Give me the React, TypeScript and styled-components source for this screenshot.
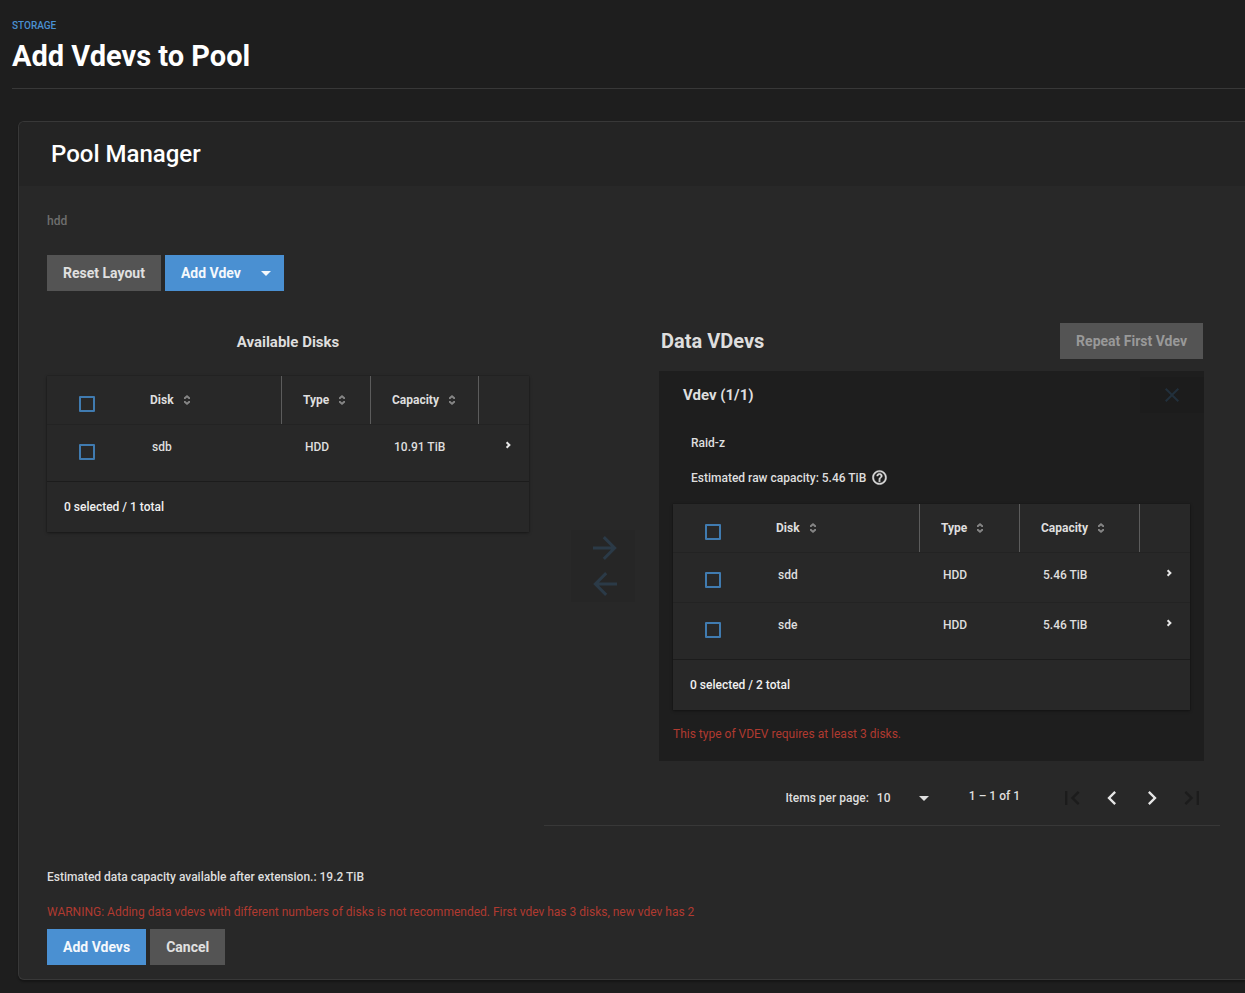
import React from "react";
import styled, { createGlobalStyle } from "styled-components";

const GlobalStyle = createGlobalStyle`
  *, *::before, *::after { box-sizing: border-box; }
  body {
    margin: 0;
    background: #1e1e1e;
    color: #dedede;
    font-family: Roboto, "Liberation Sans", sans-serif;
    font-size: 12px;
    line-height: 16px;
    font-weight: 500;
  }
  button, select, input { font: inherit; }
  h1, h2, h3, p { margin: 0; }
`;

const Page = styled.div`
  padding: 20px 0 13px;
  overflow-x: hidden;
`;

const PageHeader = styled.header`
  margin-left: 12px;
  padding-bottom: 12px;
  border-bottom: 1px solid #383838;
`;

const Crumb = styled.a`
  display: block;
  width: max-content;
  color: #4a90d2;
  font-size: 10px;
  line-height: 12px;
  text-decoration: none;
`;

const PageTitle = styled.h1`
  margin-top: 4px;
  color: #fff;
  font-size: 29px;
  line-height: 40px;
  font-weight: 700;
`;

const Card = styled.section`
  margin: 32px 0 0 18px;
  border: 1px solid #383838;
  border-right: 0;
  border-radius: 6px 0 0 6px;
  background: #282828;
  box-shadow: 0 2px 2px rgba(0, 0, 0, 0.3);
  overflow: hidden;
`;

const CardHeader = styled.div`
  padding: 16px 32px;
  background: #242424;
`;

const CardTitle = styled.h2`
  color: #fff;
  font-size: 24px;
  line-height: 32px;
  font-weight: 500;
`;

const CardBody = styled.div`
  padding: 27px 25px 14px 28px;
`;

const PoolName = styled.p`
  color: #6e6e6e;
`;

const ButtonRow = styled.div<{ $top: number }>`
  display: flex;
  gap: 4px;
  margin-top: ${(p) => p.$top}px;
`;

const Button = styled.button<{ $primary?: boolean; $menu?: boolean }>`
  display: inline-flex;
  align-items: center;
  gap: 20px;
  height: 36px;
  padding: 0 ${(p) => (p.$menu ? 13 : 16)}px 0 16px;
  border: 0;
  background: ${(p) => (p.$primary ? "#4a90d2" : "#545454")};
  color: ${(p) => (p.$primary ? "#f4f8fc" : "#e0e0e0")};
  font-size: 14px;
  font-weight: 700;
  white-space: nowrap;
  &:disabled { color: #999; }
`;

const Columns = styled.div`
  display: grid;
  grid-template-columns: minmax(0, 482fr) minmax(0, 676fr);
  column-gap: 15px;
  margin-top: 32px;
`;

const Available = styled.section`
  display: flex;
  flex-direction: column;
  gap: 14px;
`;

const SmallHeading = styled.h3`
  font-size: 15px;
  line-height: 39px;
  font-weight: 700;
  text-align: center;
`;

const Layout = styled.section`
  border-bottom: 1px solid #383838;
`;

const LayoutGrid = styled.div`
  display: grid;
  grid-template-columns: 64px minmax(0, 1fr);
  column-gap: 24px;
  row-gap: 12px;
  padding: 0 16px 0 27px;
`;

const GroupHeader = styled.div`
  grid-column: 2;
  display: flex;
  align-items: center;
  justify-content: space-between;
  padding: 0 1px 0 2px;
`;

const GroupTitle = styled.h3`
  font-size: 20px;
  line-height: 24px;
  font-weight: 700;
`;

const Arrows = styled.div`
  align-self: center;
  display: flex;
  flex-direction: column;
`;

const GhostButton = styled.button<{ $move?: boolean }>`
  display: flex;
  align-items: center;
  justify-content: center;
  width: 64px;
  height: 36px;
  padding: 0 0 0 ${(p) => (p.$move ? 4 : 0)}px;
  border: 0;
  background: rgba(0, 0, 0, 0.04);
  color: ${(p) => (p.$move ? "#2b3a47" : "#22303c")};
`;

const Vdev = styled.section`
  padding-bottom: 19px;
  background: #1e1e1e;
`;

const VdevHeader = styled.div`
  display: flex;
  align-items: center;
  justify-content: space-between;
  padding: 6px 0 6px 24px;
`;

const VdevTitle = styled.h3`
  font-size: 15px;
  line-height: 20px;
  font-weight: 700;
`;

const VdevInfo = styled.div`
  display: flex;
  flex-direction: column;
  gap: 18px;
  padding: 15px 32px 18px;
`;

const InfoLine = styled.p`
  display: flex;
  align-items: center;
  gap: 5px;
  height: 17px;
`;

const TableBox = styled.div`
  box-shadow: 0 1px 3px rgba(0, 0, 0, 0.4), 0 0 1px rgba(0, 0, 0, 0.4);
  background: #282828;
`;

const VdevTable = styled.div`
  margin: 0 14px;
`;

const Table = styled.table`
  width: 100%;
  table-layout: fixed;
  border-collapse: separate;
  border-spacing: 0;
`;

const HeadCell = styled.th<{ $divided?: boolean }>`
  height: 48px;
  padding: 0 0 0 21px;
  border-right: ${(p) => (p.$divided ? "1px solid #5c5c5c" : "0")};
  text-align: left;
  font-weight: 700;
`;

const HeadLabel = styled.span`
  display: flex;
  align-items: center;
  gap: 10px;
`;

const Cell = styled.td`
  height: 50px;
  padding: 14px 0 0 23px;
  border-top: 1px solid #232323;
  vertical-align: top;
`;

const CheckHead = styled.th`
  height: 48px;
  padding: 20px 0 0 32px;
  vertical-align: top;
  text-align: left;
`;

const CheckCell = styled(Cell)`
  padding: 19px 0 0 32px;
`;

const Check = styled.input`
  appearance: none;
  display: block;
  width: 16px;
  height: 16px;
  margin: 0;
  border: 2px solid #407bb0;
  border-radius: 1px;
`;

const Expand = styled.button`
  display: block;
  margin: 0;
  padding: 0;
  border: 0;
  background: none;
  color: #e8e8e8;
`;

const ExpandCell = styled(Cell)`
  padding: 12px 0 0 21px;
`;

const TableFooter = styled.div`
  margin-top: 7px;
  padding: 17px;
  border-top: 1px solid #1c1c1c;
  color: #f0f0f0;
`;

const ErrorText = styled.p<{ $inset?: boolean }>`
  margin-top: ${(p) => (p.$inset ? 16 : 19)}px;
  padding: 0 ${(p) => (p.$inset ? 14 : 0)}px;
  color: #b03a30;
  font-weight: 400;
`;

const Paginator = styled.div`
  display: flex;
  align-items: center;
  justify-content: flex-end;
  padding: 17px 8px 7px 0;
`;

const PageSize = styled.label`
  display: flex;
  align-items: center;
  gap: 8px;
`;

const SelectWrap = styled.span`
  display: grid;
  grid-template-columns: 52px;
  align-items: center;
  & > * { grid-area: 1 / 1; }
  & > svg { justify-self: end; pointer-events: none; }
`;

const Select = styled.select`
  appearance: none;
  width: 100%;
  padding: 0;
  border: 0;
  background: transparent;
  color: inherit;
`;

const Range = styled.span`
  margin: 0 32px 4px 40px;
`;

const PageButton = styled.button`
  display: flex;
  align-items: center;
  justify-content: center;
  width: 40px;
  height: 40px;
  padding: 0;
  border: 0;
  background: none;
  color: #e6e6e6;
  &:disabled { color: #1c1c1c; }
`;

const Estimate = styled.p`
  margin-top: 43px;
`;

const Icon = ({ d, size, bold }: { d: string; size: number; bold?: boolean }) => (
  <svg
    width={size}
    height={size}
    viewBox="0 0 24 24"
    fill="currentColor"
    stroke={bold ? "currentColor" : "none"}
    strokeWidth="0.6"
    aria-hidden="true"
  >
    <path d={d} />
  </svg>
);

const ICONS = {
  right: "M4,11V13H16L10.5,18.5L11.92,19.92L19.84,12L11.92,4.08L10.5,5.5L16,11H4Z",
  left: "M20,11V13H8L13.5,18.5L12.08,19.92L4.16,12L12.08,4.08L13.5,5.5L8,11H20Z",
  close:
    "M19,6.41L17.59,5L12,10.59L6.41,5L5,6.41L10.59,12L5,17.59L6.41,19L12,13.41L17.59,19L19,17.59L13.41,12L19,6.41Z",
  help: "M11 18h2v-2h-2v2zm1-16C6.48 2 2 6.48 2 12s4.48 10 10 10 10-4.48 10-10S17.52 2 12 2zm0 18c-4.41 0-8-3.59-8-8s3.59-8 8-8 8 3.59 8 8-3.59 8-8 8zm0-14c-2.21 0-4 1.79-4 4h2c0-1.1.9-2 2-2s2 .9 2 2c0 2-3 1.75-3 5h2c0-2.25 3-2.5 3-5 0-2.21-1.79-4-4-4z",
  first: "M18.41 16.59L13.82 12l4.59-4.59L17 6l-6 6 6 6zM6 6h2v12H6z",
  prev: "M15.41 7.41L14 6l-6 6 6 6 1.41-1.41L10.83 12z",
  next: "M10 6L8.59 7.41 13.17 12l-4.58 4.59L10 18l6-6z",
  last: "M5.59 7.41L10.18 12l-4.59 4.59L7 18l6-6-6-6zM16 6h2v12h-2z",
};

const Caret = () => (
  <svg width="10" height="5" viewBox="0 0 10 5" fill="currentColor" aria-hidden="true">
    <path d="M0 0h10L5 5z" />
  </svg>
);

const SortIcon = () => (
  <svg width="6" height="10" viewBox="0 0 6 10" fill="#858585" aria-hidden="true">
    <path d="M3 0L6 2.6V4H4.6L3 2.6L1.4 4H0V2.6zM3 10L6 7.4V6H4.6L3 7.4L1.4 6H0V7.4z" />
  </svg>
);

const RowChevron = () => (
  <svg width="16" height="16" viewBox="0 0 16 16" fill="none" stroke="currentColor" strokeWidth="2" aria-hidden="true">
    <path d="M6.6 5.2L9.4 8l-2.8 2.8" />
  </svg>
);

type Disk = { name: string; type: string; capacity: string };

function DiskTable({ disks, typeWidth, capacityWidth }: { disks: Disk[]; typeWidth: number; capacityWidth: number }) {
  return (
    <TableBox>
      <Table>
        <colgroup>
          <col width="82" />
          <col />
          <col width={typeWidth} />
          <col width={capacityWidth} />
          <col width="50" />
        </colgroup>
        <thead>
          <tr>
            <CheckHead>
              <Check type="checkbox" aria-label="Select all disks" />
            </CheckHead>
            {["Disk", "Type", "Capacity"].map((label) => (
              <HeadCell key={label} $divided>
                <HeadLabel>
                  {label}
                  <SortIcon />
                </HeadLabel>
              </HeadCell>
            ))}
            <HeadCell />
          </tr>
        </thead>
        <tbody>
          {disks.map((disk) => (
            <tr key={disk.name}>
              <CheckCell>
                <Check type="checkbox" aria-label={`Select ${disk.name}`} />
              </CheckCell>
              <Cell>{disk.name}</Cell>
              <Cell>{disk.type}</Cell>
              <Cell>{disk.capacity}</Cell>
              <ExpandCell>
                <Expand aria-label={`Expand ${disk.name}`}>
                  <RowChevron />
                </Expand>
              </ExpandCell>
            </tr>
          ))}
        </tbody>
      </Table>
      <TableFooter>0 selected / {disks.length} total</TableFooter>
    </TableBox>
  );
}

const available: Disk[] = [{ name: "sdb", type: "HDD", capacity: "10.91 TiB" }];
const vdevDisks: Disk[] = [
  { name: "sdd", type: "HDD", capacity: "5.46 TiB" },
  { name: "sde", type: "HDD", capacity: "5.46 TiB" },
];

export default function App() {
  return (
    <>
      <GlobalStyle />
      <Page>
        <PageHeader>
          <Crumb href="#storage">STORAGE</Crumb>
          <PageTitle>Add Vdevs to Pool</PageTitle>
        </PageHeader>
        <Card>
          <CardHeader>
            <CardTitle>Pool Manager</CardTitle>
          </CardHeader>
          <CardBody>
            <PoolName>hdd</PoolName>
            <ButtonRow $top={26}>
              <Button>Reset Layout</Button>
              <Button $primary $menu>
                Add Vdev
                <Caret />
              </Button>
            </ButtonRow>
            <Columns>
              <Available>
                <SmallHeading>Available Disks</SmallHeading>
                <DiskTable disks={available} typeWidth={89} capacityWidth={108} />
              </Available>
              <Layout>
                <LayoutGrid>
                  <GroupHeader>
                    <GroupTitle>Data VDevs</GroupTitle>
                    <Button disabled>Repeat First Vdev</Button>
                  </GroupHeader>
                  <Arrows>
                    <GhostButton $move disabled aria-label="Move to vdev">
                      <Icon d={ICONS.right} size={36} />
                    </GhostButton>
                    <GhostButton $move disabled aria-label="Move to available disks">
                      <Icon d={ICONS.left} size={36} />
                    </GhostButton>
                  </Arrows>
                  <Vdev>
                    <VdevHeader>
                      <VdevTitle>Vdev (1/1)</VdevTitle>
                      <GhostButton disabled aria-label="Remove vdev">
                        <Icon d={ICONS.close} size={24} />
                      </GhostButton>
                    </VdevHeader>
                    <VdevInfo>
                      <InfoLine>Raid-z</InfoLine>
                      <InfoLine>
                        Estimated raw capacity: 5.46 TiB
                        <Icon d={ICONS.help} size={17} bold />
                      </InfoLine>
                    </VdevInfo>
                    <VdevTable>
                      <DiskTable disks={vdevDisks} typeWidth={100} capacityWidth={120} />
                    </VdevTable>
                    <ErrorText $inset>This type of VDEV requires at least 3 disks.</ErrorText>
                  </Vdev>
                </LayoutGrid>
                <Paginator>
                  <PageSize>
                    Items per page:
                    <SelectWrap>
                      <Select defaultValue="10">
                        <option>10</option>
                        <option>20</option>
                        <option>50</option>
                      </Select>
                      <Caret />
                    </SelectWrap>
                  </PageSize>
                  <Range>1 – 1 of 1</Range>
                  <PageButton disabled aria-label="First page">
                    <Icon d={ICONS.first} size={28} />
                  </PageButton>
                  <PageButton aria-label="Previous page">
                    <Icon d={ICONS.prev} size={28} />
                  </PageButton>
                  <PageButton aria-label="Next page">
                    <Icon d={ICONS.next} size={28} />
                  </PageButton>
                  <PageButton disabled aria-label="Last page">
                    <Icon d={ICONS.last} size={28} />
                  </PageButton>
                </Paginator>
              </Layout>
            </Columns>
            <Estimate>Estimated data capacity available after extension.: 19.2 TiB</Estimate>
            <ErrorText>
              WARNING: Adding data vdevs with different numbers of disks is not recommended. First vdev has 3 disks, new
              vdev has 2
            </ErrorText>
            <ButtonRow $top={9}>
              <Button $primary>Add Vdevs</Button>
              <Button>Cancel</Button>
            </ButtonRow>
          </CardBody>
        </Card>
      </Page>
    </>
  );
}
